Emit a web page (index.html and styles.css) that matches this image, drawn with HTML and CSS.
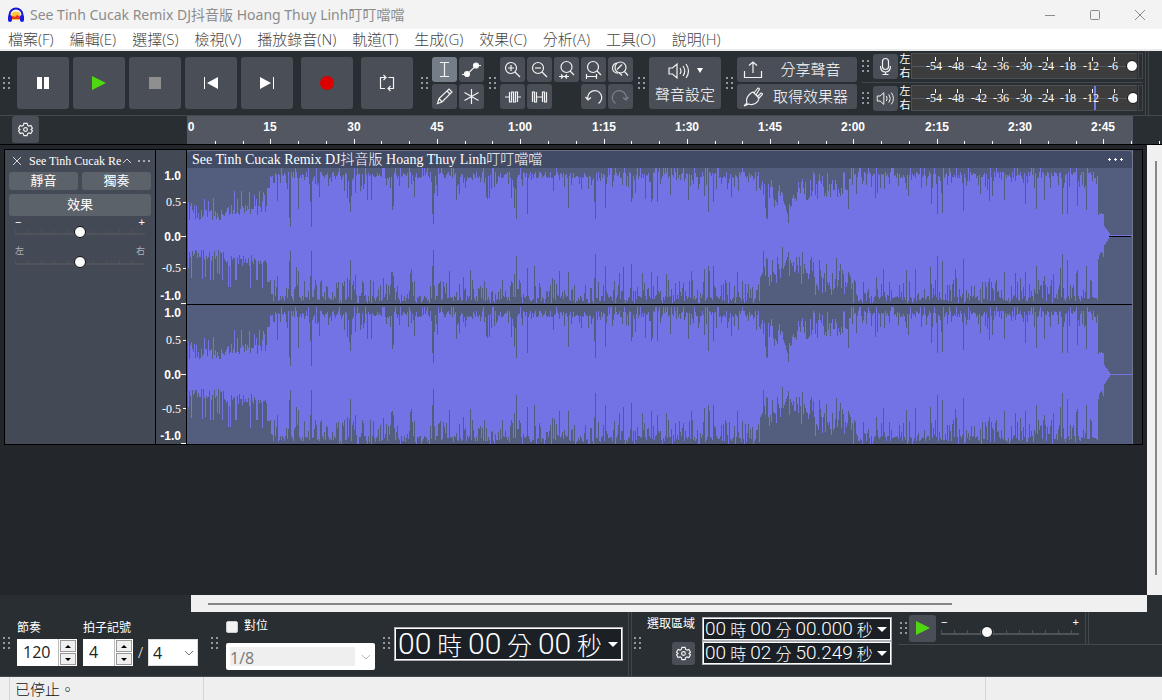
FILE: index.html
```html
<!DOCTYPE html>
<html lang="zh-Hant">
<head>
<meta charset="utf-8">
<title>See Tinh Cucak Remix DJ抖音版 Hoang Thuy Linh叮叮噹噹</title>
<link rel="stylesheet" href="styles.css">
</head>
<body>
<svg class="defs" aria-hidden="true">
  <symbol id="grip" viewBox="0 0 7 13"><path d="M0 0h2v2H0zM5 0h2v2H5zM0 5h2v2H0zM5 5h2v2H5zM0 10h2v2H0zM5 10h2v2H5z" fill="#9297a3"/></symbol>
  <symbol id="gear" viewBox="0 0 16 16"><path d="M6.3 1.5h3.4l.6 2.1 1.3.7 2.1-.6 1.7 2.9L13.9 8l1.5 1.4-1.7 2.9-2.1-.6-1.3.7-.6 2.1H6.3l-.6-2.1-1.3-.7-2.1.6L.6 9.4 2.1 8 .6 6.600l1.700-2.900 2.100.6 1.300-.7z"/><circle cx="8" cy="8" r="2"/></symbol>
  <symbol id="lens" viewBox="0 0 25 25"><circle cx="11" cy="11" r="5.500"/><path d="M15 15l5 5"/></symbol>
  <symbol id="speaker" viewBox="0 0 22 20"><path d="M1 7h3.500L9 3v14l-4.500-4H1zM12 7q2 3 0 6M15 5q3.500 5 0 10M18 3q5 7 0 14"/></symbol>
</svg>
<header class="titlebar">
  <svg class="logo" viewBox="0 0 18 16"><path d="M5 6q4-3 8 0l1 7H4z" fill="#ffc53a"/><path d="M4 10l2-1 2 1 2-2 2 1 2 1-1 2H5z" fill="#e9351c"/><path d="M2.500 10V8a6.500 6.500 0 0 1 13 0v2" fill="none" stroke="#1717cf" stroke-width="2"/><rect x="1" y="8" width="4" height="7" rx="2" fill="#1a1ae0"/><rect x="13" y="8" width="4" height="7" rx="2" fill="#1a1ae0"/></svg>
  <h1>See Tinh Cucak Remix DJ抖音版 Hoang Thuy Linh叮叮噹噹</h1>
  <div class="winbtns">
    <button aria-label="最小化"><svg viewBox="0 0 12 12"><path d="M1 6.500h10"/></svg></button>
    <button aria-label="最大化"><svg viewBox="0 0 12 12"><rect x="1.500" y="1.500" width="9" height="9" rx="1"/></svg></button>
    <button aria-label="關閉"><svg viewBox="0 0 12 12"><path d="M1 1l10 10M11 1L1 11"/></svg></button>
  </div>
</header>
<nav class="menu">
  <button>檔案(F)</button><button>編輯(E)</button><button>選擇(S)</button><button>檢視(V)</button><button>播放錄音(N)</button><button>軌道(T)</button><button>生成(G)</button><button>效果(C)</button><button>分析(A)</button><button>工具(O)</button><button>說明(H)</button>
</nav>
<section class="toolbar">
  <svg class="grip"><use href="#grip"/></svg>
  <div class="transport">
    <button class="big" aria-label="暫停"><svg viewBox="0 0 26 26"><path d="M7 7h5v12H7zM14 7h5v12h-5z" fill="#fff"/></svg></button>
    <button class="big" aria-label="播放"><svg viewBox="0 0 26 26"><path d="M6 6l14 7-14 7z" fill="#4fd811"/></svg></button>
    <button class="big" aria-label="停止"><svg viewBox="0 0 26 26"><path d="M7 7h12v12H7z" fill="#8f8f8f"/></svg></button>
    <button class="big" aria-label="跳至開頭"><svg viewBox="0 0 26 26"><path d="M6 7h1v12H6zM20 7v12L9 13z" fill="#fff"/></svg></button>
    <button class="big" aria-label="跳至結尾"><svg viewBox="0 0 26 26"><path d="M19 7h1v12h-1zM6 7v12l11-6z" fill="#fff"/></svg></button>
    <button class="big rec" aria-label="錄音"><svg viewBox="0 0 26 26"><circle cx="13" cy="13" r="7" fill="#dc0000"/></svg></button>
    <button class="big rec" aria-label="循環"><svg class="line" viewBox="0 0 26 26"><path d="M11 18.500H6.500v-11h5.500M9.500 5l2.500 2.500L9.500 10M14.500 7.500h5v11H14M16.500 16L14 18.500l2.500 2.500"/></svg></button>
  </div>
  <svg class="grip"><use href="#grip"/></svg>
  <div class="tools two">
    <button class="small on" aria-label="選取工具"><svg class="line" viewBox="0 0 25 25"><path d="M8 5.500h9M12.500 5.500v14M8 19.500h9"/></svg></button>
    <button class="small" aria-label="包絡工具"><svg class="line" viewBox="0 0 25 25"><path d="M3 17.500h5l9-9h5"/><circle cx="8" cy="17" r="2.500" fill="#fff"/><circle cx="17" cy="8.500" r="2.500" fill="#fff"/></svg></button>
    <button class="small" aria-label="繪製工具"><svg class="line" viewBox="0 0 25 25"><path d="M5.500 19.500l1.500-5L17 5l3 3L10 18zM7 14.500l3 3.500M15 7l3 3"/></svg></button>
    <button class="small" aria-label="多功能工具"><svg class="line" viewBox="0 0 25 25"><path d="M12.500 5v15M5.500 8.500l14 8M19.500 8.500l-14 8"/></svg></button>
  </div>
  <svg class="grip"><use href="#grip"/></svg>
  <div class="tools five">
    <button class="small" aria-label="放大"><svg class="line" viewBox="0 0 25 25"><use href="#lens"/><path d="M8 11h6M11 8v6"/></svg></button>
    <button class="small" aria-label="縮小"><svg class="line" viewBox="0 0 25 25"><use href="#lens"/><path d="M8 11h6"/></svg></button>
    <button class="small" aria-label="縮放至選取"><svg class="line" viewBox="0 0 25 25"><circle cx="12.500" cy="10" r="5.500"/><path d="M16 14l4 4M5 19.500h10M7 17.500l2 2-2 2M13 17.500l-2 2 2 2"/></svg></button>
    <button class="small" aria-label="縮放至專案"><svg class="line" viewBox="0 0 25 25"><circle cx="12" cy="10" r="5.500"/><path d="M16 14l4 4M5 19.500h10M5.500 17v5M15.500 17v5"/></svg></button>
    <button class="small" aria-label="縮放切換"><svg class="line" viewBox="0 0 25 25"><circle cx="12.500" cy="10.500" r="5.500"/><path d="M9 6a5 5 0 0 0 1 10M14 7.500l-5 5M16.500 14.500l3.500 4M11 15.500l3 3"/></svg></button>
    <button class="small" aria-label="修剪"><svg class="line" viewBox="0 0 25 25"><path d="M5 13h4.500V8v10h2V8h2v10h2V8h2v10M17.500 13H21"/></svg></button>
    <button class="small" aria-label="靜音選取"><svg class="line" viewBox="0 0 25 25"><path d="M5.500 18V8h2v10h2V8v5h6M15.500 18V8h2v10h2V8"/></svg></button>
    <span></span>
    <button class="small" aria-label="復原"><svg class="line" viewBox="0 0 25 25"><path d="M17.500 19.500a7 7 0 1 0-10.500-4M4.500 13l2.500 3 3-2.500"/></svg></button>
    <button class="small off" aria-label="重做"><svg class="line" viewBox="0 0 25 25"><path d="M7.500 19.500a7 7 0 1 1 10.500-4M20.500 13L18 16l-3-2.500"/></svg></button>
  </div>
  <svg class="grip"><use href="#grip"/></svg>
  <button class="setup"><span><svg class="line spk" viewBox="0 0 22 20"><use href="#speaker"/></svg><svg class="tri" viewBox="0 0 6 6"><path d="M0 0h6L3 5z" fill="#fff"/></svg></span>聲音設定</button>
  <svg class="grip"><use href="#grip"/></svg>
  <div class="share">
    <button><svg class="line" viewBox="0 0 20 20"><path d="M1.500 11v6.500h17V11M10 13V2M6 5.500L10 2l4 3.500"/></svg><span>分享聲音</span></button>
    <button><svg class="line" viewBox="0 0 20 20"><path d="M1 19l3-3q-2-5 4-10l2-1 6 6-1 3q-4 5-9 3zM11 6l4-5q2 0 1 2l-3 5M14 10l4-4q2 0 1 2l-4 4"/></svg><span>取得效果器</span></button>
  </div>
  <div class="meters">
    <div class="meter"><svg class="grip"><use href="#grip"/></svg><button class="small" aria-label="錄音音量"><svg class="line" viewBox="0 0 25 25"><rect x="9.500" y="4.500" width="6" height="11" rx="3"/><path d="M7.500 12q0 6 5 6t5-6M12.500 18v3M9.500 20.500h6"/></svg></button><div class="lr"><span>左</span><span>右</span></div><svg class="scale" data-knob="221"></svg><i class="clipbox"></i></div>
    <div class="meter"><svg class="grip"><use href="#grip"/></svg><button class="small" aria-label="播放音量"><svg class="line" viewBox="-4 -3 30 26"><use href="#speaker"  width="22" height="20"/></svg></button><div class="lr"><span>左</span><span>右</span></div><svg class="scale" data-knob="222" data-peak="182"></svg><i class="clipbox"></i></div>
  </div>
</section>
<section class="timeline">
  <div class="corner"><button class="gearbtn" aria-label="時間軸選項"><svg class="line" viewBox="0 0 16 16"><use href="#gear"/></svg></button></div>
  <svg class="ruler" id="ruler"></svg>
</section>
<main>
  <div class="trackarea">
    <article class="track">
      <div class="panel">
        <div class="phead"><button aria-label="關閉音軌"><svg viewBox="0 0 10 10"><path d="M1 1l8 8M9 1L1 9"/></svg></button><span>See Tinh Cucak Re</span><button aria-label="收合"><svg viewBox="0 0 10 10"><path d="M1 7l4-4 4 4"/></svg></button><button class="more" aria-label="更多"><svg viewBox="0 0 12 4"><path d="M0 1h2v2H0zM5 1h2v2H5zM10 1h2v2h-2z"/></svg></button></div>
        <div class="row"><button>靜音</button><button>獨奏</button></div>
        <div class="row fx"><button>效果</button></div>
        <div class="sl"><div class="ends"><span>−</span><span>+</span></div><input type="range" value="50" aria-label="增益"></div>
        <div class="sl pan"><div class="ends"><span>左</span><span>右</span></div><input type="range" value="50" aria-label="左右平衡"></div>
      </div>
      <svg class="vruler" id="vruler"></svg>
      <div class="lane">
        <div class="clip">
          <div class="cliphead"><span>See Tinh Cucak Remix DJ抖音版 Hoang Thuy Linh叮叮噹噹</span><button aria-label="片段選單"><svg viewBox="0 0 15 5"><path d="M0 2h3v1H0zM1 1h1v3H1zM6 2h3v1H6zM7 1h1v3H7zM12 2h3v1h-3zM13 1h1v3h-1z" fill="#fff"/></svg></button></div>
          <svg class="wave one" viewBox="0 0 946 136" preserveAspectRatio="none"></svg>
          <svg class="wave" viewBox="0 0 946 139" preserveAspectRatio="none"></svg>
        </div>
      </div>
    </article>
  </div>
  <div class="vscroll"><i></i></div>
</main>
<div class="hrow"><div class="hscroll"><i></i></div></div>
<footer class="bottom">
  <svg class="grip"><use href="#grip"/></svg>
  <div class="field tempo"><label for="bpm">節奏</label><div class="spin"><input id="bpm" value="120"><span class="ud"><button aria-label="增加節奏"><svg viewBox="0 0 6 3"><path d="M0 3l3-3 3 3z"/></svg></button><button aria-label="減少節奏"><svg viewBox="0 0 6 3"><path d="M0 0l3 3 3-3z"/></svg></button></span></div></div>
  <div class="field sig"><label for="beats">拍子記號</label><div class="spin"><input id="beats" value="4"><span class="ud"><button aria-label="增加拍數"><svg viewBox="0 0 6 3"><path d="M0 3l3-3 3 3z"/></svg></button><button aria-label="減少拍數"><svg viewBox="0 0 6 3"><path d="M0 0l3 3 3-3z"/></svg></button></span><b>/</b><span class="sel"><select aria-label="音符時值"><option>4</option></select><svg viewBox="0 0 10 6"><path d="M1 1l4 4 4-4"/></svg></span></div></div>
  <svg class="grip"><use href="#grip"/></svg>
  <div class="snap"><label><input type="checkbox">對位</label><span class="sel dis"><select aria-label="對位單位" disabled><option>1/8</option></select><svg viewBox="0 0 10 6"><path d="M1 1l4 4 4-4"/></svg></span></div>
  <svg class="grip"><use href="#grip"/></svg>
  <div class="time large"><span>00</span><em>時</em><span>00</span><em>分</em><span>00</span><em>秒</em><button aria-label="時間格式"><svg viewBox="0 0 10 5"><path d="M0 0h10L5 5z"/></svg></button></div>
  <i class="divider"></i>
  <svg class="grip"><use href="#grip"/></svg>
  <div class="selection">
    <div class="sellabel"><span>選取區域</span><button class="gearbtn" aria-label="選取設定"><svg class="line" viewBox="0 0 16 16"><use href="#gear"/></svg></button></div>
    <div class="times">
      <div class="time"><span>00</span><em>時</em><span>00</span><em>分</em><span>00.000</span><em>秒</em><button aria-label="開始時間格式"><svg viewBox="0 0 10 5"><path d="M0 0h10L5 5z"/></svg></button></div>
      <div class="time"><span>00</span><em>時</em><span>02</span><em>分</em><span>50.249</span><em>秒</em><button aria-label="結束時間格式"><svg viewBox="0 0 10 5"><path d="M0 0h10L5 5z"/></svg></button></div>
    </div>
  </div>
  <div class="speed">
    <svg class="grip"><use href="#grip"/></svg>
    <button class="playbtn" aria-label="以指定速度播放"><svg viewBox="0 0 26 26"><path d="M6 6l14 7-14 7z" fill="#4fd811"/></svg></button>
    <div class="sl"><div class="ends"><span>−</span><span>+</span></div><input type="range" value="32" aria-label="播放速度"></div>
    <i class="divider"></i>
  </div>
</footer>
<div class="status"><i></i><span>已停止。</span><span></span><span></span></div>
<script src="app.js"></script>
</body>
</html>
```
FILE: styles.css
```css
*{box-sizing:border-box}
body{margin:0;height:100vh;display:flex;flex-direction:column;overflow:hidden;background:#292e32;color:#fff;font-family:"Liberation Sans","Noto Sans CJK TC",sans-serif;font-size:12px;font-weight:400}
button{border:0;padding:0;background:none;color:inherit;font:inherit;display:flex;align-items:center;justify-content:center}
.defs{position:absolute;width:0;height:0}
svg{display:block;flex:none}
.line{fill:none;stroke:#f2f2f2;stroke-width:1.2}
.grip{width:7px;height:13px}
.titlebar{flex:none;height:29px;background:#f3f3f3;display:flex;align-items:center;padding-left:7px}
.logo{width:18px;height:16px}
.titlebar h1{flex:1;margin:0 0 0 5px;font:400 14px/20px "Noto Sans","Noto Sans CJK TC",sans-serif;color:#8c8c8c}
.winbtns{display:flex}
.winbtns button{width:45px;height:28px}
.winbtns svg{width:12px;height:12px;fill:none;stroke:#8c8c8c}
.menu{flex:none;height:22px;background:#fff;border-bottom:2px solid #ececec;display:flex;align-items:center;gap:16px;padding-left:8px;color:#444;font:300 15px/20px "Open Sans","Noto Sans CJK TC",sans-serif}
.toolbar{flex:none;height:65px;border-bottom:1px solid #44484d;display:flex;align-items:center;padding-left:3px}
.transport{display:flex;gap:4px;margin:0 8px 0 7px}
.big{width:52px;height:52px;border-radius:3px;background:#4a4f57}
.big svg{width:26px;height:26px}
.rec{margin-left:4px}
.small{width:25px;height:25px;border-radius:3px;background:#4a4f57}
.small svg{width:25px;height:25px}
.small.on{background:#747d88}
.small.off .line{stroke:#7d8187}
.tools{display:grid;gap:2px}
.two{grid-template-columns:repeat(2,25px);margin:0 5px 0 4px}
.five{grid-template-columns:repeat(5,25px);margin:0 5px 0 4px}
.setup{width:72px;height:52px;margin:0 5px 0 4px;border-radius:3px;background:#4a4f57;flex-direction:column;gap:4px;font-size:15px;font-weight:300;line-height:20px}
.setup span{display:flex;align-items:center;gap:7px}
.spk{width:22px;height:20px}
.tri{width:6px;height:6px}
.share{display:flex;flex-direction:column;gap:2px;margin:0 5px 0 4px}
.share button{width:120px;height:25px;border-radius:3px;background:#4a4f57;font-size:15px;font-weight:300;line-height:20px;padding:0 9px 0 6px}
.share svg{width:20px;height:20px}
.share span{flex:1;text-align:center}
.share button:last-child span{text-align:right}
.share button:first-child span{padding-left:10px}
.meters{display:flex;flex-direction:column;border-right:1px solid #44484d;padding-right:2px;height:64px;position:relative}
.meters::after{content:"";position:absolute;right:-4px;top:0;bottom:0;width:1px;background:#44484d}
.meter{height:32px;display:flex;align-items:center;padding-bottom:1px;border-bottom:1px solid #44484d}
.meter:last-child{border:0;padding-bottom:2px}
.meter .small{margin-left:4px}
.lr{width:12px;margin-left:1px;font-size:11px;line-height:14px;display:flex;flex-direction:column;align-items:center}
.scale{width:226px;height:26px;background:#3d3d3d;border:1px solid #4d5054;border-right:0}
.scale text,.vruler text{fill:#fff;font-family:"Liberation Serif",serif;font-size:12px}
.clipbox{width:5px;height:26px;margin-left:1px;border:1px solid #44484d}
.timeline{flex:none;height:29px;display:flex;border-bottom:1px solid #000}
.corner{flex:none;width:187px;padding-left:12px}
.gearbtn{width:27px;height:27px;border-radius:3px;background:#4a4f57}
.gearbtn svg{width:15px;height:15px}
.ruler{flex:1;min-width:0;height:28px}
.ruler text{fill:#fff;font-weight:700;font-size:12px}
main{flex:1;min-height:0;display:flex;background:#23262b}
.trackarea{flex:1;min-width:0;padding:4px 4px 0}
.track{display:flex;border:1px solid #000;background:#292d31}
.panel{flex:none;width:151px;background:#444956;border-right:1px solid #000;padding:0 4px}
.phead{display:flex;align-items:center;height:22px;padding:0 1px 0 2px;font:12px/20px "Liberation Serif",serif;white-space:nowrap}
.phead span{padding-left:6px}
.phead button{width:12px;height:16px}
.phead svg{width:10px;height:10px;fill:none;stroke:#d5d5d8}
.phead .more{width:12px;margin-left:auto}
.phead .more svg{width:12px;height:4px;fill:#aab;stroke:none}
.row{display:flex;gap:4px;height:18px;margin-bottom:4px}
.row button{flex:1;background:#5c626a;border-radius:3px;font-size:13px;line-height:16px}
.row.fx{height:22px;margin-bottom:2px}
.sl{position:relative;height:30px;padding:0 6px}
.ends{display:flex;justify-content:space-between;font-size:11px;line-height:8px;height:8px}
.pan .ends{font-size:9px;color:#aeb0b5;line-height:6px}
.sl input{appearance:none;display:block;width:100%;height:12px;margin:0;background:repeating-linear-gradient(90deg,#4f545b 0 1px,transparent 1px 13px) 0 4px/100% 3px no-repeat,linear-gradient(#4f545b,#4f545b) 0 7px/100% 2px no-repeat}
.sl input::-webkit-slider-thumb{appearance:none;width:12px;height:12px;border-radius:6px;background:#fafafa;border:1px solid #111}
.vruler{width:31px;height:294px;background:#444956;border-right:1px solid #000}
.vruler .b{font-weight:700;font-family:"Liberation Sans",sans-serif}
.lane{flex:1;min-width:0;padding-right:9px}
.clip{background:#535e7e;border-right:1px solid #70778f;display:flex;flex-direction:column}
.cliphead{height:18px;border-top:1px solid #6a7186;background:#424b66;border-radius:4px 4px 0 0;display:flex;align-items:center;justify-content:space-between;padding:0 9px 0 5px;font:300 14px/16px "Liberation Serif","Noto Sans CJK TC",serif;white-space:nowrap}
.cliphead svg{width:15px;height:5px}
.wave{width:100%;height:139px}
.wave.one{height:137px;border-bottom:1px solid #000}
.vscroll{width:15px;background:#f0f0f0;padding:16px 0 20px 8px}
.vscroll i{display:block;width:2px;height:100%;background:#868686}
.hrow{flex:none;height:17px;padding:0 15px 0 191px}
.hscroll{height:17px;background:#f0f0f0;padding:8px 195px 0 17px}
.hscroll i{display:block;height:2px;background:#868686}
.bottom{flex:none;height:65px;border-bottom:1px solid #44484d;display:flex;align-items:flex-start;padding-left:3px}
.bottom>.grip{margin-top:25px}
.field{padding-top:9px}
.field label{display:block;line-height:14px;height:18px}
.tempo{margin:0 6px 0 7px}
.sig{margin-right:13px}
.spin{display:flex;height:27px;align-items:stretch}
.spin input{width:42px;border:0;border-right:1px solid #bbb;padding:0 0 2px 6px;font:16px "Open Sans",sans-serif;color:#222;background:#fff}
.sig input{width:32px}
.ud{width:18px;background:#fff;padding:1px;display:flex;flex-direction:column;gap:1px}
.ud button{flex:1;background:#f0f0f0;border:1px solid #999}
.ud svg{width:6px;height:3px}
.spin b{width:15px;text-align:center;font:300 15px/26px "Open Sans",sans-serif}
.sel{position:relative;display:block;width:50px}
.sel select{appearance:none;width:100%;height:27px;margin:0;padding:0 4px;border:1px solid #ddd;border-radius:0;background:#fff;color:#222;font:16px "Open Sans",sans-serif}
.sel svg{position:absolute;right:4px;top:11px;width:10px;height:6px;fill:none;stroke:#777}
.dis{width:149px}
.dis select{color:#777;background:#efefef;border:4px solid #fff;border-right-width:20px;border-radius:2px;padding:0;opacity:1}
.dis svg{stroke:#bbb}
.snap{margin:0 8px;padding-top:4px}
.snap label{display:flex;align-items:center;gap:6px;height:16px;margin-bottom:11px}
.snap input{appearance:none;width:12px;height:12px;margin:6px 0 0;background:#f3f3f3;border:1px solid #ccc;border-radius:2px}
.time{display:flex;align-items:center;justify-content:space-between;width:190px;height:24px;border:1px solid #aeb0b5;outline:1px solid #fff;outline-offset:-2px;background:#1b1f26;padding:0 4px 0 2px;font:300 19px/22px Roboto,sans-serif}
.time em{font:300 16px/22px "Noto Sans CJK TC",sans-serif}
.time svg{width:10px;height:5px;fill:#fff}
.large{width:229px;height:34px;margin:15px 5px 0 4px;padding-left:3px;font-size:30px;line-height:30px}
.large em{font-size:25px;line-height:30px}
.divider{width:4px;height:64px;border:1px solid #44484d;border-width:0 1px;flex:none}
.divider+.grip{margin-left:2px}
.selection{display:flex;margin:5px 6px 0 6px;gap:7px}
.sellabel{display:flex;flex-direction:column;align-items:flex-end;gap:11px;line-height:14px}
.sellabel .gearbtn{width:23px;height:23px}
.times{display:flex;flex-direction:column}
.speed{flex:1;height:33px;border-bottom:1px solid #44484d;display:flex;align-items:center;gap:2px;padding-left:2px}
.playbtn{width:27px;height:27px;border-radius:3px;background:#4a4f57}
.playbtn svg{width:26px;height:26px}
.speed .sl{width:138px;height:24px;margin:0 4px 0 3px;padding:2px 0 0}
.speed .divider{height:32px}
.status{flex:none;height:23px;background:#efefef;color:#111;display:flex;font-size:15px;font-weight:300;line-height:26px;overflow:hidden}
.status i{width:10px;border-right:1px solid #d5d5d5}
.status span:nth-of-type(1){width:194px;padding-left:5px;border-right:1px solid #d5d5d5}
.status span:nth-of-type(2){flex:1;border-right:1px solid #d5d5d5}
.status span:nth-of-type(3){width:176px}
```
FILE: app.js
```js
// Timeline ruler: one major tick every 15 seconds.
const labels = ['0', '15', '30', '45', '1:00', '1:15', '1:30', '1:45', '2:00', '2:15', '2:30', '2:45'];
const perMark = 83.3;
let out = '<rect width="946" height="28" fill="#535761"/>';
labels.forEach((t, i) => {
  const x = Math.round(i * perMark);
  out += `<text x="${i ? x : 4}" y="15" text-anchor="middle">${t}</text>`;
});
for (let i = 1; i < 36; i++) {
  const h = i % 3 ? 3 : 5;
  out += `<rect x="${Math.round(i * perMark / 3)}" y="${28 - h}" width="1" height="${h}" fill="#fff"/>`;
}
document.getElementById('ruler').innerHTML = out;

// Level meters, -54 dB to 0 dB.
document.querySelectorAll('.scale').forEach(s => {
  let m = '<rect y="12" width="226" height="1" fill="#55585c"/>';
  if (s.dataset.peak) m += `<rect x="${s.dataset.peak}" width="2" height="24" fill="#6c7fe8"/>`;
  for (let i = 0; i < 10; i++) {
    const x = 22 + Math.round(i * 22.4);
    m += `<rect x="${x + 1}" y="3" width="1" height="4" fill="#fff"/>`;
    if (i < 9) m += `<text x="${x}" y="16" text-anchor="middle">${i * 6 - 54}</text>`;
  }
  m += `<circle cx="${s.dataset.knob - 1}" cy="12" r="5.5" fill="#fff" stroke="#111"/>`;
  s.innerHTML = m;
});

// Amplitude ruler for both channels.
const marks = [[26, '1.0', 1], [52, '0.5'], [87, '0.0', 1], [118, '-0.5'], [146, '-1.0', 1],
  [163, '1.0', 1], [190, '0.5'], [225, '0.0', 1], [259, '-0.5'], [286, '-1.0', 1]];
document.getElementById('vruler').innerHTML =
  marks.map(([y, t, b]) => `<text x="25" y="${y + 4}" text-anchor="end"${b ? ' class="b"' : ''}>${t}</text>`).join('') +
  [52, 118, 190, 258].map(y => `<rect x="27" y="${y}" width="3" height="1" fill="#fff"/>`).join('') +
  [86, 153, 224, 293].map(y => `<rect x="25" y="${y}" width="5" height="1" fill="#fff"/>`).join('');

// Waveform: [x, upper amplitude, lower amplitude] at the quiet moments of the song.
const dips = [[103, 9, 15], [102, 18, 25], [124, 9, 15], [123, 34, 40], [90, 35, 40], [111, 27, 35],
  [163, 24, 24], [162, 33, 44], [160, 38, 42], [157, 45, 45], [205, 26, 36], [206, 30, 40], [246, 12, 14],
  [245, 22, 30], [247, 43, 50], [329, 17, 20], [327, 28, 38], [324, 38, 45], [340, 22, 32], [381, 28, 36],
  [408, 17, 18], [407, 34, 42], [418, 28, 30], [444, 34, 28], [464, 34, 36], [470, 34, 40], [522, 24, 30],
  [527, 34, 30], [580, 18, 22], [581, 17, 23], [579, 28, 40], [602, 13, 16], [603, 32, 40], [662, 27, 36],
  [745, 32, 48], [751, 22, 20], [756, 23, 25], [777, 25, 23], [803, 35, 42], [818, 36, 36], [839, 32, 36],
  [850, 27, 30], [858, 36, 40], [876, 22, 18], [881, 22, 24], [891, 30, 34], [900, 26, 30]];
function envelope(x, rnd) {
  if (x < 2) return [34, 32];
  if (x < 80) {
    const grow = x > 38 ? 5 : 0;
    return [15 + grow + rnd() * 11 + (rnd() > .78 ? 14 : 0), 14 + grow + rnd() * 12 + (rnd() > .82 ? 22 : 0)];
  }
  if (x < 83) return [48, 46];
  if (x > 911) {
    if (x < 918) return [18 + rnd() * 5, 14 + rnd() * 10];
    return x < 924 ? [(924 - x) * 1.4 + 1, (924 - x) * 1.4 + 1] : [1, 0.5];
  }
  const r = rnd(), q = rnd();
  let up = 57 + rnd() * 7, down = 60 + rnd() * 6;
  if (r < .1) up = 68; else if (r < .3) up = 46 + rnd() * 12; else if (r < .34) up = 34 + rnd() * 12;
  if (q < .08) down = 68; else if (q < .42) down = 44 + rnd() * 16; else if (q < .47) down = 30 + rnd() * 14;
  if (x > 573 && x < 665) {
    const soft = x < 625 ? 14 : 8;
    up = Math.min(up, 62) - soft + rnd() * 10;
    down -= soft + rnd() * 14;
    if (r > .6) up -= 12;
    if (x > 592 && x < 612) {
      const cap = 18 + Math.abs(x - 602) * 3;
      up = Math.min(up, cap + rnd() * 8); down = Math.min(down, cap);
    }
  }
  return [up, down];
}
document.querySelectorAll('.wave').forEach((svg, ch) => {
  let seed = 77;
  const rnd = () => (seed = (seed * 16807) % 2147483647) / 2147483647;
  const mid = ch ? 69.5 : 67.5, low = ch ? 1.02 : 1;
  const special = new Map(dips.map(d => [d[0], d]));
  let d = '';
  for (let x = 1; x < 946; x++) {
    let [u, l] = envelope(x, rnd);
    if (special.has(x)) [, u, l] = special.get(x);
    u = Math.min(u, mid); l = Math.min(l * low, mid);
    d += `M${x} ${(mid - u).toFixed(0)}h1V${(mid + l).toFixed(0)}h-1z`;
  }
  svg.innerHTML = `<path d="${d}" fill="#7373e6" shape-rendering="crispEdges"/>` +
    (ch ? '' : '<rect x="923" y="68" width="22" height="1" fill="#000"/>');
});
```
